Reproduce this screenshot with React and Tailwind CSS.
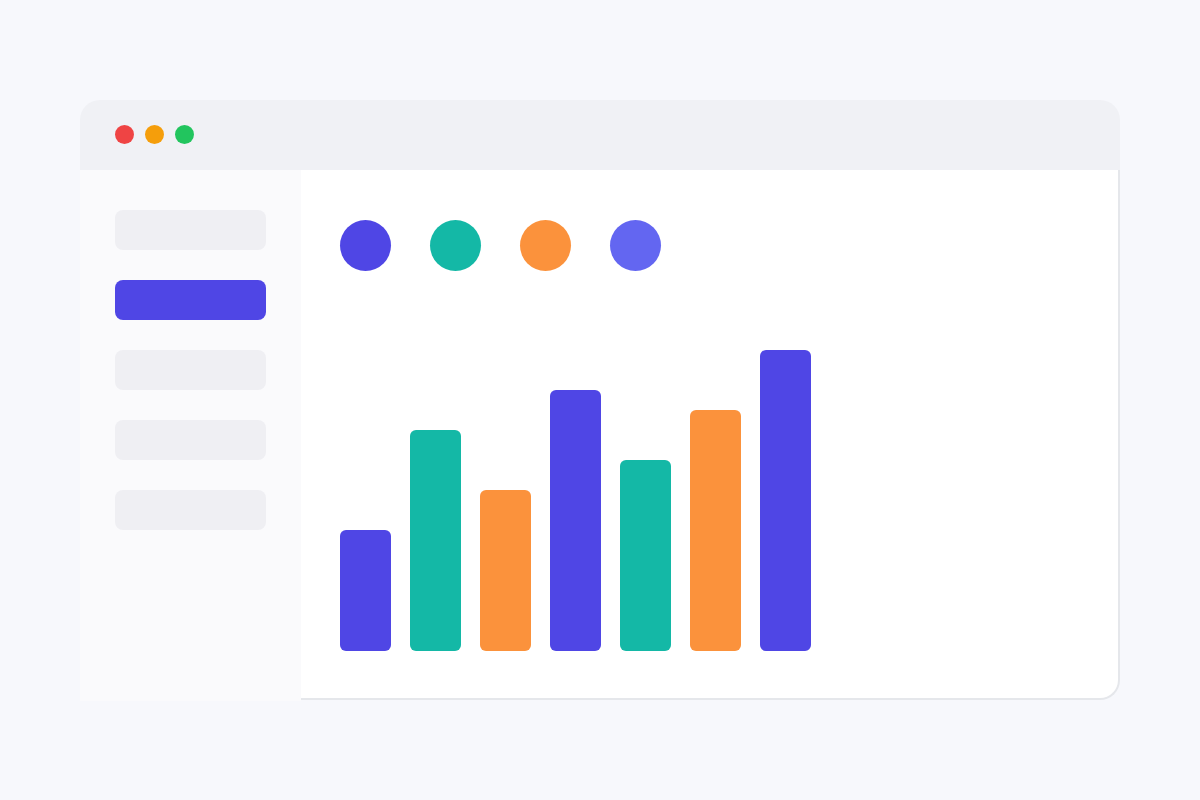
import React from 'react';

const bars = [
  { h: 'h-[121px]', c: 'bg-[#4f46e5]' },
  { h: 'h-[221px]', c: 'bg-[#14b8a6]' },
  { h: 'h-[161px]', c: 'bg-[#fb923c]' },
  { h: 'h-[261px]', c: 'bg-[#4f46e5]' },
  { h: 'h-[191px]', c: 'bg-[#14b8a6]' },
  { h: 'h-[241px]', c: 'bg-[#fb923c]' },
  { h: 'h-[301px]', c: 'bg-[#4f46e5]' },
];

const App = () => {
  return (
    <div className="w-[1200px] h-[800px] bg-[#f7f8fc] pt-[100px] pl-[80px]">
      <div className="w-[1040px] flex flex-col">
        {/* title bar */}
        <div className="shrink-0 h-[70px] bg-[#f0f1f5] rounded-t-[20px] flex items-start gap-[11px] pt-[25px] px-[35px]">
          <div className="w-[19px] h-[19px] rounded-full bg-[#ef4444]" />
          <div className="w-[19px] h-[19px] rounded-full bg-[#f59e0b]" />
          <div className="w-[19px] h-[19px] rounded-full bg-[#22c55e]" />
        </div>

        <div className="flex items-start">
          {/* sidebar */}
          <div className="w-[221px] h-[531px] bg-[#fafafc] pt-[40px] pl-[35px] flex flex-col gap-[30px]">
            <div className="w-[151px] h-[40px] rounded-[8px] bg-[#efeff3]" />
            <div className="w-[151px] h-[40px] rounded-[8px] bg-[#4f46e5]" />
            <div className="w-[151px] h-[40px] rounded-[8px] bg-[#efeff3]" />
            <div className="w-[151px] h-[40px] rounded-[8px] bg-[#efeff3]" />
            <div className="w-[151px] h-[40px] rounded-[8px] bg-[#efeff3]" />
          </div>

          {/* main */}
          <div className="flex-1 h-[530px] bg-white border-r-2 border-b-2 border-[#e5e7eb] rounded-br-[20px] pt-[50px] pl-[39px]">
            <div className="flex gap-[39px]">
              <div className="w-[51px] h-[51px] rounded-full bg-[#4f46e5]" />
              <div className="w-[51px] h-[51px] rounded-full bg-[#14b8a6]" />
              <div className="w-[51px] h-[51px] rounded-full bg-[#fb923c]" />
              <div className="w-[51px] h-[51px] rounded-full bg-[#6366f1]" />
            </div>
            <div className="mt-[79px] h-[301px] flex items-end gap-[19px]">
              {bars.map((b, i) => (
                <div key={i} className={`w-[51px] rounded-[6px] ${b.h} ${b.c}`} />
              ))}
            </div>
          </div>
        </div>
      </div>
    </div>
  );
};

export default App;
